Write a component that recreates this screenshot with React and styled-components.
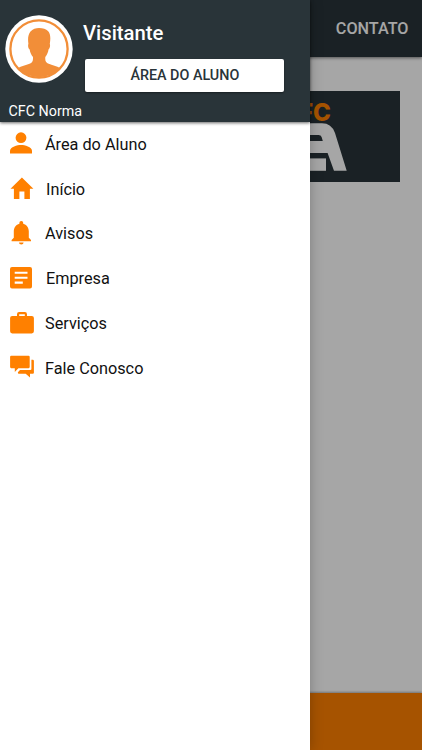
import React from "react";
import styled, { createGlobalStyle } from "styled-components";

const GlobalStyle = createGlobalStyle`
  * {
    box-sizing: border-box;
  }

  body {
    margin: 0;
    font-family: Roboto, "Liberation Sans", sans-serif;
    background: white;
    overflow: hidden;
  }
`;

const Screen = styled.div`
  position: relative;
  height: 100vh;
  overflow: hidden;
`;

const Page = styled.div`
  display: flex;
  flex-direction: column;
  height: 100%;
`;

const TopBar = styled.header`
  display: flex;
  justify-content: flex-end;
  align-items: center;
  height: 57px;
  padding-right: 13.5px;
  background: #293439;
  color: white;
  box-shadow: 0 1px 3px rgba(0, 0, 0, 0.5);
`;

const TabLabel = styled.span`
  font-size: 16.2px;
  font-weight: 500;
  line-height: 20px;
`;

const Content = styled.main`
  flex: 1;
  padding: 34px 22px 0;
`;

const Banner = styled.svg`
  display: block;
  width: 378px;
  height: 91px;
`;

const Footer = styled.footer`
  height: 57.5px;
  background: #ff8000;
  box-shadow: 0 -1px 2px rgba(0, 0, 0, 0.3);
`;

const Scrim = styled.div`
  position: absolute;
  inset: 0;
  background: rgba(0, 0, 0, 0.35);
`;

const Drawer = styled.aside`
  position: absolute;
  top: 0;
  left: 0;
  bottom: 0;
  width: 309.6px;
  background: white;
  box-shadow: 0 0 12px rgba(0, 0, 0, 0.25);
`;

const DrawerHeader = styled.div`
  height: 122px;
  padding: 15px 25px 0 5px;
  background: #293439;
  color: white;
  box-shadow: 0 1px 3px rgba(0, 0, 0, 0.6);
`;

const Profile = styled.div`
  display: flex;
  gap: 11px;
`;

const Avatar = styled.svg`
  flex: none;
  width: 68px;
  height: 68px;
`;

const ProfileInfo = styled.div`
  flex: 1;
  padding-top: 6px;
`;

const UserName = styled.h1`
  margin: 0 0 14px -1px;
  font-size: 20.3px;
  font-weight: 500;
  line-height: 24px;
`;

const StudentButton = styled.button`
  display: flex;
  justify-content: center;
  width: 199.5px;
  height: 33px;
  margin: 0 0 0 0.6px;
  padding: 0 0 0 1px;
  border: none;
  border-radius: 2px;
  background: white;
  color: #293439;
  font-family: inherit;
  font-size: 14.35px;
  font-weight: 500;
  line-height: 33px;
  box-shadow: 0 1px 2px rgba(0, 0, 0, 0.4);
  cursor: pointer;
`;

const SchoolName = styled.p`
  margin: 10px 0 0 3.5px;
  font-size: 14.3px;
  line-height: 18px;
`;

const MenuList = styled.ul`
  list-style: none;
  margin: 0;
  padding: 0;
`;

const MenuItem = styled.li`
  display: flex;
  align-items: center;
  height: 44.8px;
  padding-left: 8px;
  color: #111;
  font-size: 16.25px;
  cursor: pointer;

  span {
    margin-left: ${({ $indent }) => $indent || 9}px;
  }
`;

const Icon = styled.svg`
  flex: none;
  width: 28px;
  height: 28px;
  fill: #ff8000;
`;

const PersonIcon = () => (
  <Icon viewBox="0 0 28 28">
    <circle cx="13" cy="7.7" r="5.4" />
    <path d="M2 23.4V20.8C2 17.1 9.3 15.1 13 15.1S24 17.1 24 20.8V23.4Z" />
  </Icon>
);

const HomeIcon = () => (
  <Icon viewBox="0 0 28 28">
    <path d="M11.4 24V16.4H16.4V24H21.9V13.8H25.4L13.9 2.5L2.5 13.8H5.9V24Z" />
  </Icon>
);

const BellIcon = () => (
  <Icon viewBox="0 0 28 28">
    <path d="M11 22.5H15.6A2.3 2.1 0 0 1 11 22.5Z" />
    <path d="M20.8 17.8V11.2C20.8 7.5 18.6 4.5 15.2 3.7V2.8A1.9 1.9 0 0 0 11.4 2.8V3.7C8 4.5 5.8 7.5 5.8 11.2V17.8L3.6 20.1V21.2H23V20.1Z" />
  </Icon>
);

const PaperIcon = () => (
  <Icon viewBox="0 0 28 28">
    <path
      fillRule="evenodd"
      d="M4 2H22Q24 2 24 4V21.6Q24 23.6 22 23.6H4Q2 23.6 2 21.6V4Q2 2 4 2ZM6.7 6.7V8.8H19.5V6.7ZM6.7 11.7V13.8H19.5V11.7ZM6.7 16.6V18.7H14.8V16.6Z"
    />
  </Icon>
);

const BriefcaseIcon = () => (
  <Icon viewBox="0 0 28 28">
    <path
      fillRule="evenodd"
      d="M9 6V4.2Q9 2.1 11.1 2.1H16.9Q19 2.1 19 4.2V6H23.8Q25.9 6 25.9 8.1V21.3Q25.9 23.4 23.8 23.4H4.2Q2.1 23.4 2.1 21.3V8.1Q2.1 6 4.2 6ZM11.2 6H16.8V4.3H11.2Z"
    />
  </Icon>
);

const ChatIcon = () => (
  <Icon viewBox="0 0 28 28">
    <path d="M3.2 1.8H20.6Q21.7 1.8 21.7 2.9V13.1Q21.7 14.2 20.6 14.2H10.4L6.8 18V14.2H3.2Q2.1 14.2 2.1 13.1V2.9Q2.1 1.8 3.2 1.8Z" />
    <path d="M23.4 5.8H24.8Q25.9 5.8 25.9 6.9V18.7Q25.9 19.8 24.8 19.8H22V23.6L17.7 19.8H10.8Q9.9 19.8 9.9 18.7V18.2L12 16H22.3Q23.4 16 23.4 14.9Z" />
  </Icon>
);

const menuItems = [
  { label: "Área do Aluno", icon: PersonIcon },
  { label: "Início", icon: HomeIcon, indent: 10 },
  { label: "Avisos", icon: BellIcon },
  { label: "Empresa", icon: PaperIcon, indent: 10 },
  { label: "Serviços", icon: BriefcaseIcon },
  { label: "Fale Conosco", icon: ChatIcon },
];

const SchoolBanner = () => (
  <Banner viewBox="22 91 378 91">
    <rect x="22" y="91" width="378" height="91" fill="#293439" />
    <text
      x="299"
      y="120.7"
      fill="#ff8000"
      fontFamily="Inter, sans-serif"
      fontSize="24"
      fontWeight="800"
      textLength="32"
      lengthAdjust="spacingAndGlyphs"
    >
      FC
    </text>
    {/* roof-shaped emblem */}
    <path
      fill="white"
      d="M290 123.3H322Q331.5 123.3 335 133L346.7 170.8H334L327.6 153H290V141H322.8L321.6 137Q321 135 318.5 135H290Z"
    />
    <rect x="290" y="158.4" width="36" height="12.4" fill="white" />
  </Banner>
);

const UserAvatar = () => (
  <Avatar viewBox="0 0 68 68">
    <circle cx="34" cy="34" r="33.7" fill="white" />
    <circle cx="34" cy="34" r="28.6" fill="none" stroke="#f28e38" strokeWidth="2.3" />
    <path
      fill="#f28e38"
      d="M13 53C16 51.3 21 50 24.5 48.8C27.5 47.6 28.2 46 28 42C26 39.5 25 37 24.7 34.5C23.3 33.5 22.7 31 23.4 28.7C22.7 24 23 19.5 25.5 16.5C27.5 14 31 13 34 13C38 13 41 14 43 16C45.8 19 45.6 24 44.8 28.7C45.5 31 44.8 33.5 43.5 34.5C43.2 37 42.2 39.5 40.3 42C40 46 40.7 47.6 43.7 48.8C47 50 52 51.3 55 53A28.5 28.5 0 0 1 13 53Z"
    />
  </Avatar>
);

const App = () => {
  return (
    <>
      <GlobalStyle />
      <Screen>
        <Page>
          <TopBar>
            <TabLabel>CONTATO</TabLabel>
          </TopBar>
          <Content>
            <SchoolBanner />
          </Content>
          <Footer />
        </Page>

        <Scrim />

        <Drawer>
          <DrawerHeader>
            <Profile>
              <UserAvatar />
              <ProfileInfo>
                <UserName>Visitante</UserName>
                <StudentButton>ÁREA DO ALUNO</StudentButton>
              </ProfileInfo>
            </Profile>
            <SchoolName>CFC Norma</SchoolName>
          </DrawerHeader>
          <MenuList>
            {menuItems.map(({ label, icon: ItemIcon, indent }) => (
              <MenuItem key={label} $indent={indent}>
                <ItemIcon />
                <span>{label}</span>
              </MenuItem>
            ))}
          </MenuList>
        </Drawer>
      </Screen>
    </>
  );
};

export default App;
